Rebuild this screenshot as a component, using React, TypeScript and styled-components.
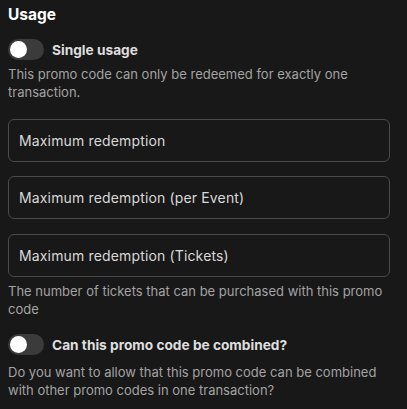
import React from "react";
import styled, { createGlobalStyle } from "styled-components";

const Global = createGlobalStyle`
  html, body { margin: 0; padding: 0; background: #181818; }
  body { font-family: Inter, "Noto Sans", sans-serif; color: #fff; }
`;

const Page = styled.div`
  padding: 5px 17px 0 8px;
  display: flex;
  flex-direction: column;
`;

const Heading = styled.h2`
  margin: 0;
  font-size: 15.5px;
  font-weight: 700;
  line-height: 20px;
  color: #fff;
`;

const ToggleRow = styled.div<{ $mt: number }>`
  display: flex;
  align-items: center;
  gap: 8px;
  margin-top: ${(p) => p.$mt}px;
`;

const Track = styled.div`
  width: 36px;
  height: 21px;
  border-radius: 11px;
  background: #3b3b3b;
  position: relative;
  flex-shrink: 0;
`;

const Knob = styled.div`
  position: absolute;
  left: 2px;
  top: 2px;
  width: 17px;
  height: 17px;
  border-radius: 50%;
  background: #fff;
`;

const ToggleLabel = styled.span`
  font-size: 13.7px;
  font-weight: 700;
  color: #dedede;
`;

const Help = styled.p<{ $mt: number }>`
  margin: ${(p) => p.$mt}px 0 0;
  font-size: 13px;
  line-height: 18px;
  color: #a3a3a3;
`;

const Field = styled.div<{ $mt: number }>`
  margin-top: ${(p) => p.$mt}px;
  height: 43px;
  box-sizing: border-box;
  border: 1px solid #4a4a4a;
  border-radius: 6px;
  display: flex;
  align-items: center;
  padding: 0 10px;
  font-size: 14px;
  letter-spacing: 0.15px;
  color: #d8d8d8;
`;

const Toggle = () => (
  <Track>
    <Knob />
  </Track>
);

export default function App() {
  return (
    <>
      <Global />
      <Page>
        <Heading>Usage</Heading>
        <ToggleRow $mt={14}>
          <Toggle />
          <ToggleLabel>Single usage</ToggleLabel>
        </ToggleRow>
        <Help $mt={5}>
          This promo code can only be redeemed for exactly one transaction.
        </Help>
        <Field $mt={18}>Maximum redemption</Field>
        <Field $mt={14}>Maximum redemption (per Event)</Field>
        <Field $mt={15}>Maximum redemption (Tickets)</Field>
        <Help $mt={5}>
          The number of tickets that can be purchased with this promo code
        </Help>
        <ToggleRow $mt={16}>
          <Toggle />
          <ToggleLabel>Can this promo code be combined?</ToggleLabel>
        </ToggleRow>
        <Help $mt={8}>
          Do you want to allow that this promo code can be combined with other
          promo codes in one transaction?
        </Help>
      </Page>
    </>
  );
}
